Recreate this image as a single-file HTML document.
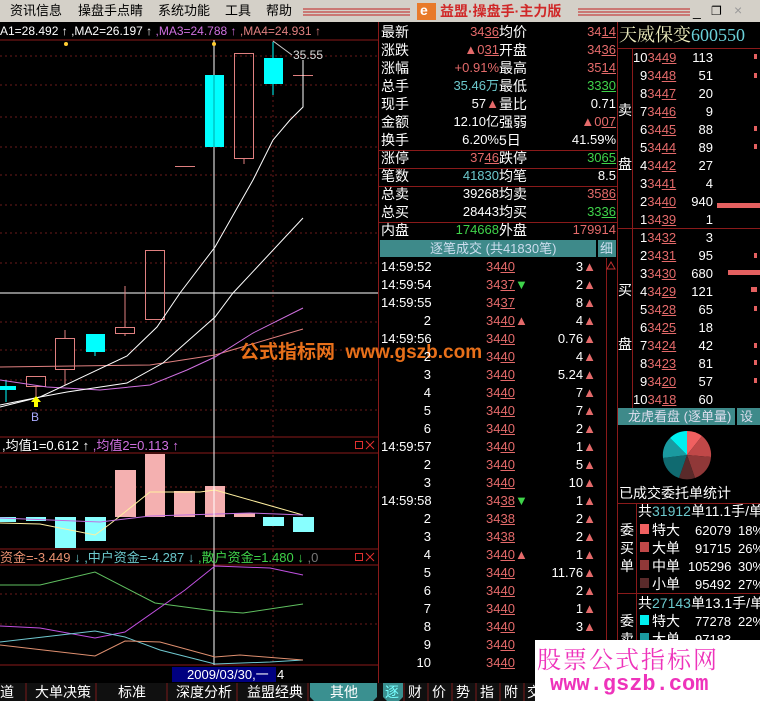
<!DOCTYPE html>
<html><head><meta charset="utf-8"><style>
body{margin:0;width:760px;height:701px;overflow:hidden;background:#000;position:relative;font-family:"Liberation Sans","Noto Sans CJK SC",sans-serif;}
.t{position:absolute;white-space:nowrap;font-size:13px;line-height:16px;color:#fff}
.c{font-size:14px}
.r{color:#e46a6a}.g{color:#3fd34a}.cy{color:#6cc8cc}.w{color:#fff}
u{text-decoration:underline}
svg{position:absolute;left:0;top:0}
</style></head><body>
<svg width="760" height="701">
<rect x="0" y="0" width="760" height="22" fill="#d4d0c8"/>
<g stroke="#c02020" stroke-width="1">
<line x1="303" y1="9" x2="410" y2="9"/><line x1="303" y1="12" x2="410" y2="12"/><line x1="303" y1="15" x2="410" y2="15"/>
<line x1="578" y1="9" x2="690" y2="9"/><line x1="578" y1="12" x2="690" y2="12"/><line x1="578" y1="15" x2="690" y2="15"/>
</g>
<rect x="417" y="3" width="19" height="17" fill="#e87a2a"/>
<g stroke="#8a1a1a" fill="none">
<line x1="0" y1="40" x2="378" y2="40"/><line x1="0" y1="437" x2="378" y2="437"/>
<line x1="0" y1="453" x2="378" y2="453"/><line x1="0" y1="549" x2="378" y2="549"/>
<line x1="0" y1="565" x2="378" y2="565"/><line x1="0" y1="665" x2="378" y2="665"/>
<line x1="378.5" y1="22" x2="378.5" y2="683"/>
<line x1="617.5" y1="22" x2="617.5" y2="683"/>
<line x1="606.5" y1="258" x2="606.5" y2="683"/>
</g>
<g stroke="#6a1a1a" stroke-dasharray="2,3">
<line x1="0" y1="56" x2="378" y2="56"/><line x1="0" y1="85" x2="378" y2="85"/><line x1="0" y1="117" x2="378" y2="117"/><line x1="0" y1="147" x2="378" y2="147"/><line x1="0" y1="175" x2="378" y2="175"/><line x1="0" y1="205" x2="378" y2="205"/><line x1="0" y1="233" x2="378" y2="233"/><line x1="0" y1="263" x2="378" y2="263"/><line x1="0" y1="322" x2="378" y2="322"/><line x1="0" y1="350" x2="378" y2="350"/><line x1="0" y1="380" x2="378" y2="380"/><line x1="0" y1="410" x2="378" y2="410"/>
<line x1="0" y1="487" x2="378" y2="487"/><line x1="0" y1="624" x2="378" y2="624"/><line x1="0" y1="594" x2="378" y2="594"/>
<line x1="273" y1="40" x2="273" y2="665"/>
</g>
<line x1="0" y1="293" x2="378" y2="293" stroke="#fff"/>
<line x1="214" y1="40" x2="214" y2="665" stroke="#fff"/>
<rect x="205" y="75" width="19" height="72" fill="#00ffff"/>
<line x1="214" y1="75" x2="214" y2="147" stroke="#0aa"/>
<rect x="234.5" y="53.5" width="19" height="105" fill="none" stroke="#e08080"/>
<line x1="244" y1="159" x2="244" y2="164" stroke="#e08080"/>
<line x1="273" y1="42" x2="273" y2="95" stroke="#0ff"/>
<rect x="264" y="58" width="19" height="26" fill="#00ffff"/>
<line x1="293" y1="75.5" x2="313" y2="75.5" stroke="#e08080"/>
<line x1="175" y1="166.5" x2="195" y2="166.5" stroke="#e08080"/>
<rect x="145.5" y="250.5" width="19" height="69" fill="none" stroke="#e08080"/>
<line x1="125" y1="286" x2="125" y2="327" stroke="#e08080"/><line x1="125" y1="333" x2="125" y2="336" stroke="#e08080"/>
<rect x="115.5" y="327.5" width="19" height="6" fill="none" stroke="#e08080"/>
<rect x="86" y="334" width="19" height="18" fill="#00ffff"/><line x1="95" y1="352" x2="95" y2="356" stroke="#0ff"/>
<line x1="65" y1="330" x2="65" y2="385" stroke="#e08080"/>
<rect x="55.5" y="338.5" width="19" height="31" fill="#000" stroke="#e08080"/>
<line x1="36" y1="386" x2="36" y2="398" stroke="#e08080"/>
<rect x="26.5" y="376.5" width="19" height="10" fill="#000" stroke="#e08080"/>
<rect x="0" y="386" width="16" height="4" fill="#00ffff"/><line x1="6" y1="380" x2="6" y2="402" stroke="#0ff"/>
<g fill="none" stroke-width="1">
<polyline stroke="#e08080" points="0,367 150,365 215,355 303,329"/>
<polyline stroke="#d070e0" points="0,380 47,387 100,390 150,385 187,370 215,357 253,333 303,308"/>
<polyline stroke="#fff" points="0,405 40,397 67,392 127,383 163,363 215,317 233,293 303,218"/>
<polyline stroke="#fff" points="0,407 40,397 127,356 157,327 180,293 215,247 253,180 273,140 290,120 303,107 303,60"/>
<polyline stroke="#ccc" points="273,41 292,55"/>
</g>
<polygon points="36,396 31,402 34,402 34,407 38,407 38,402 41,402" fill="#ff0"/>
<circle cx="66" cy="44" r="2" fill="#fc3"/><circle cx="214" cy="44" r="2" fill="#fc3"/>
<rect x="0" y="517" width="16" height="5" fill="#8ff"/><rect x="26" y="517" width="20" height="4" fill="#8ff"/>
<rect x="55" y="517" width="21" height="31" fill="#8ff"/><rect x="85" y="517" width="21" height="24" fill="#8ff"/>
<rect x="115" y="470" width="21" height="47" fill="#f4b0b0"/><rect x="145" y="454" width="20" height="63" fill="#f4b0b0"/>
<rect x="174" y="491" width="21" height="26" fill="#f4b0b0"/><rect x="205" y="486" width="20" height="31" fill="#f4b0b0"/>
<rect x="234" y="513" width="21" height="4" fill="#f4b0b0"/><rect x="263" y="517" width="21" height="9" fill="#8ff"/>
<rect x="293" y="517" width="21" height="15" fill="#8ff"/>
<polyline fill="none" stroke="#fff0a0" points="0,523 40,524 95,535 110,524 150,492 200,492 215,490 303,515"/>
<polyline fill="none" stroke="#c070e0" points="0,518 100,522 150,516 250,513 303,515"/>
<line x1="214" y1="453" x2="214" y2="549" stroke="#fff"/>
<polyline fill="none" stroke="#60c060" points="0,585 40,585 95,572 155,603 215,611 243,613 303,604"/>
<polyline fill="none" stroke="#c050e0" points="0,626 40,628 95,638 125,632 185,590 215,566 270,568 303,575"/>
<polyline fill="none" stroke="#70c8d0" points="0,642 95,631 125,637 160,650 215,664 270,662 303,660"/>
<polyline fill="none" stroke="#e09070" points="0,645 95,656 125,641 160,642 215,657 240,655 303,660"/>
<g fill="none" stroke="#e03030"><rect x="355.5" y="441.5" width="7" height="7"/><path d="M366 441l8 8M374 441l-8 8"/><rect x="355.5" y="553.5" width="7" height="7"/><path d="M366 553l8 8M374 553l-8 8"/></g>
<rect x="172" y="667" width="104" height="15" fill="#000080"/>
<rect x="0" y="683" width="760" height="18" fill="#101010"/>
<g stroke="#7a1a1a"><line x1="26" y1="683" x2="26" y2="701"/><line x1="96" y1="683" x2="96" y2="701"/><line x1="167" y1="683" x2="167" y2="701"/><line x1="237" y1="683" x2="237" y2="701"/><line x1="308" y1="683" x2="308" y2="701"/>
<line x1="404" y1="683" x2="404" y2="701"/><line x1="428" y1="683" x2="428" y2="701"/><line x1="452" y1="683" x2="452" y2="701"/><line x1="476" y1="683" x2="476" y2="701"/><line x1="500" y1="683" x2="500" y2="701"/><line x1="524" y1="683" x2="524" y2="701"/></g>
<path d="M310 683H377V697L373 701H314L310 697Z" fill="#3a9090"/>
<path d="M383 683H403V697L399 701H387L383 697Z" fill="#3a9090"/>
<g stroke="#8a1a1a"><line x1="379" y1="150.5" x2="617" y2="150.5"/><line x1="379" y1="168.5" x2="617" y2="168.5"/><line x1="379" y1="186.5" x2="617" y2="186.5"/><line x1="379" y1="222.5" x2="617" y2="222.5"/>
<line x1="617" y1="48.5" x2="760" y2="48.5"/><line x1="617" y1="228.5" x2="760" y2="228.5"/><line x1="617" y1="503.5" x2="760" y2="503.5"/><line x1="617" y1="593.5" x2="760" y2="593.5"/>
<line x1="632.5" y1="48" x2="632.5" y2="408"/><line x1="636.5" y1="503" x2="636.5" y2="701"/></g>
<rect x="380" y="240" width="216" height="17" fill="#3e8a8a"/><rect x="598" y="240" width="18" height="17" fill="#3e8a8a"/>
<rect x="618" y="408" width="117" height="17" fill="#3e8a8a"/><rect x="737" y="408" width="23" height="17" fill="#3e8a8a"/>
<polygon points="611,262 607,269 615,269" fill="none" stroke="#c03030"/>
<rect x="717" y="203" width="43" height="5" fill="#e46060"/><rect x="728" y="270" width="32" height="5" fill="#e46060"/>
<g fill="#e46060"><rect x="754" y="54" width="3" height="5"/><rect x="754" y="73" width="3" height="5"/><rect x="754" y="126" width="3" height="5"/><rect x="754" y="144" width="3" height="5"/><rect x="754" y="253" width="3" height="5"/><rect x="751" y="287" width="6" height="5"/><rect x="754" y="306" width="3" height="5"/><rect x="754" y="343" width="3" height="5"/><rect x="754" y="360" width="3" height="5"/><rect x="754" y="378" width="3" height="5"/></g>
<g transform="translate(687,455)">
<path d="M0 0L0 -24A24 24 0 0 1 15 -19Z" fill="#f06060"/>
<path d="M0 0L15 -19A24 24 0 0 1 24 2Z" fill="#c04848"/>
<path d="M0 0L24 2A24 24 0 0 1 8 23Z" fill="#903838"/>
<path d="M0 0L8 23A24 24 0 0 1 -8 23Z" fill="#5a2a2a"/>
<path d="M0 0L-8 23A24 24 0 0 1 -24 3Z" fill="#106a70"/>
<path d="M0 0L-24 3A24 24 0 0 1 -17 -17Z" fill="#1a9aa0"/>
<path d="M0 0L-17 -17A24 24 0 0 1 0 -24Z" fill="#00f0f0"/>
</g>
<g><rect x="640" y="524" width="9" height="10" fill="#f06060"/><rect x="640" y="542" width="9" height="10" fill="#c04848"/><rect x="640" y="560" width="9" height="10" fill="#903838"/><rect x="640" y="578" width="9" height="10" fill="#5a2a2a"/><rect x="640" y="615" width="9" height="10" fill="#00f0f0"/><rect x="640" y="633" width="9" height="10" fill="#1a9aa0"/></g>
<rect x="535" y="640" width="225" height="61" fill="#fff"/>
</svg>

<div class="t" style="left:10px;top:3px;color:#000;font-size:13px">资讯信息</div>
<div class="t" style="left:78px;top:3px;color:#000;font-size:13px">操盘手点睛</div>
<div class="t" style="left:158px;top:3px;color:#000;font-size:13px">系统功能</div>
<div class="t" style="left:225px;top:3px;color:#000;font-size:13px">工具</div>
<div class="t" style="left:266px;top:3px;color:#000;font-size:13px">帮助</div>
<div class="t" style="left:420px;top:2px;color:#fff;font-weight:bold;font-size:14px">e</div>
<div class="t c" style="left:440px;top:3px;color:#d02828;font-weight:bold">益盟·操盘手·主力版</div>
<div class="t c" style="left:693px;top:3px;color:#000">_</div>
<div class="t" style="left:711px;top:3px;color:#000;font-size:12px">&#x2750;</div>
<div class="t c" style="left:734px;top:2px;color:#999">×</div>
<div class="t" style="left:0;top:23px;font-size:12px"><span class="w">A1=28.492 ↑</span> <span class="w">,MA2=26.197 ↑</span> <span style="color:#d070e0">,MA3=24.788 ↑</span> <span style="color:#e08080">,MA4=24.931 ↑</span></div>
<div class="t" style="left:293px;top:47px;font-size:12px;color:#ddd">35.55</div>
<div class="t" style="left:31px;top:409px;font-size:12px;color:#aaf">B</div>
<div class="t" style="left:240px;top:342px;font-size:19px;line-height:22px;color:#e8701a;font-weight:bold">公式指标网 &nbsp;www.gszb.com</div>
<div class="t" style="left:2px;top:438px;font-size:13px"><span class="w">,均值1=0.612 ↑</span> <span style="color:#d070e0">,均值2=0.113 ↑</span></div>
<div class="t" style="left:0;top:550px;font-size:13px"><span style="color:#e89070">资金=-3.449 </span><span class="cy">↓ ,中户资金=-4.287 ↓</span> <span class="g">,散户资金=1.480 ↓</span> <span style="color:#777">,0</span></div>
<div class="t" style="left:187px;top:667px;font-size:13px">2009/03/30,一</div>
<div class="t" style="left:277px;top:667px;font-size:13px">4</div>
<div class="t c" style="left:0;top:684px">道</div>
<div class="t c" style="left:35px;top:684px">大单决策</div>
<div class="t c" style="left:118px;top:684px">标准</div>
<div class="t c" style="left:176px;top:684px">深度分析</div>
<div class="t c" style="left:247px;top:684px">益盟经典</div>
<div class="t c" style="left:330px;top:684px">其他</div>
<div class="t c" style="left:385px;top:684px;color:#7ff">逐</div>
<div class="t c" style="left:408px;top:684px">财</div><div class="t c" style="left:432px;top:684px">价</div><div class="t c" style="left:456px;top:684px">势</div><div class="t c" style="left:480px;top:684px">指</div><div class="t c" style="left:504px;top:684px">附</div><div class="t c" style="left:527px;top:684px">交</div>

<div style="position:absolute;left:381px;top:24px;width:236px;font-size:14px">
<div class="t c" style="left:0;top:0">最新</div><div class="t r" style="right:118px;top:0">34<u>36</u></div><div class="t c" style="left:118px;top:0">均价</div><div class="t r" style="right:1px;top:0">34<u>14</u></div>
<div class="t c" style="left:0;top:18px">涨跌</div><div class="t r" style="right:118px;top:18px">▲0<u>31</u></div><div class="t c" style="left:118px;top:18px">开盘</div><div class="t r" style="right:1px;top:18px">34<u>36</u></div>
<div class="t c" style="left:0;top:36px">涨幅</div><div class="t r" style="right:118px;top:36px">+0.91%</div><div class="t c" style="left:118px;top:36px">最高</div><div class="t r" style="right:1px;top:36px">35<u>14</u></div>
<div class="t c" style="left:0;top:54px">总手</div><div class="t cy" style="right:118px;top:54px">35.46万</div><div class="t c" style="left:118px;top:54px">最低</div><div class="t g" style="right:1px;top:54px">33<u>30</u></div>
<div class="t c" style="left:0;top:72px">现手</div><div class="t" style="right:118px;top:72px">57<span class="r">▲</span></div><div class="t c" style="left:118px;top:72px">量比</div><div class="t" style="right:1px;top:72px">0.71</div>
<div class="t c" style="left:0;top:90px">金额</div><div class="t" style="right:118px;top:90px">12.10亿</div><div class="t c" style="left:118px;top:90px">强弱</div><div class="t r" style="right:1px;top:90px">▲0<u>07</u></div>
<div class="t c" style="left:0;top:108px">换手</div><div class="t" style="right:118px;top:108px">6.20%</div><div class="t c" style="left:118px;top:108px">5日</div><div class="t" style="right:1px;top:108px">41.59%</div>
<div class="t c" style="left:0;top:126px">涨停</div><div class="t r" style="right:118px;top:126px">37<u>46</u></div><div class="t c" style="left:118px;top:126px">跌停</div><div class="t g" style="right:1px;top:126px">30<u>65</u></div>
<div class="t c" style="left:0;top:144px">笔数</div><div class="t cy" style="right:118px;top:144px">41830</div><div class="t c" style="left:118px;top:144px">均笔</div><div class="t" style="right:1px;top:144px">8.5</div>
<div class="t c" style="left:0;top:162px">总卖</div><div class="t" style="right:118px;top:162px">39268</div><div class="t c" style="left:118px;top:162px">均卖</div><div class="t r" style="right:1px;top:162px">35<u>86</u></div>
<div class="t c" style="left:0;top:180px">总买</div><div class="t" style="right:118px;top:180px">28443</div><div class="t c" style="left:118px;top:180px">均买</div><div class="t g" style="right:1px;top:180px">33<u>36</u></div>
<div class="t c" style="left:0;top:198px">内盘</div><div class="t g" style="right:118px;top:198px">174668</div><div class="t c" style="left:118px;top:198px">外盘</div><div class="t r" style="right:1px;top:198px">179914</div>
</div>
<div class="t" style="left:430px;top:241px;color:#cde">逐笔成交 (共41830笔)</div>
<div class="t" style="left:600px;top:241px;color:#cde">细</div>

<div style="position:absolute;left:381px;top:259px;width:225px">
<div class="t" style="left:0;top:0">14:59:52</div><div class="t r" style="left:105px;top:0">34<u>40</u></div><div class="t" style="right:10px;top:0">3<span class="r">▲</span></div>
<div class="t" style="left:0;top:18px">14:59:54</div><div class="t r" style="left:105px;top:18px">34<u>37</u><span class="g">▼</span></div><div class="t" style="right:10px;top:18px">2<span class="r">▲</span></div>
<div class="t" style="left:0;top:36px">14:59:55</div><div class="t r" style="left:105px;top:36px">34<u>37</u></div><div class="t" style="right:10px;top:36px">8<span class="r">▲</span></div>
<div class="t" style="right:175px;top:54px">2</div><div class="t r" style="left:105px;top:54px">34<u>40</u>▲</div><div class="t" style="right:10px;top:54px">4<span class="r">▲</span></div>
<div class="t" style="left:0;top:72px">14:59:56</div><div class="t r" style="left:105px;top:72px">34<u>40</u></div><div class="t" style="right:10px;top:72px">0.76<span class="r">▲</span></div>
<div class="t" style="right:175px;top:90px">2</div><div class="t r" style="left:105px;top:90px">34<u>40</u></div><div class="t" style="right:10px;top:90px">4<span class="r">▲</span></div>
<div class="t" style="right:175px;top:108px">3</div><div class="t r" style="left:105px;top:108px">34<u>40</u></div><div class="t" style="right:10px;top:108px">5.24<span class="r">▲</span></div>
<div class="t" style="right:175px;top:126px">4</div><div class="t r" style="left:105px;top:126px">34<u>40</u></div><div class="t" style="right:10px;top:126px">7<span class="r">▲</span></div>
<div class="t" style="right:175px;top:144px">5</div><div class="t r" style="left:105px;top:144px">34<u>40</u></div><div class="t" style="right:10px;top:144px">7<span class="r">▲</span></div>
<div class="t" style="right:175px;top:162px">6</div><div class="t r" style="left:105px;top:162px">34<u>40</u></div><div class="t" style="right:10px;top:162px">2<span class="r">▲</span></div>
<div class="t" style="left:0;top:180px">14:59:57</div><div class="t r" style="left:105px;top:180px">34<u>40</u></div><div class="t" style="right:10px;top:180px">1<span class="r">▲</span></div>
<div class="t" style="right:175px;top:198px">2</div><div class="t r" style="left:105px;top:198px">34<u>40</u></div><div class="t" style="right:10px;top:198px">5<span class="r">▲</span></div>
<div class="t" style="right:175px;top:216px">3</div><div class="t r" style="left:105px;top:216px">34<u>40</u></div><div class="t" style="right:10px;top:216px">10<span class="r">▲</span></div>
<div class="t" style="left:0;top:234px">14:59:58</div><div class="t r" style="left:105px;top:234px">34<u>38</u><span class="g">▼</span></div><div class="t" style="right:10px;top:234px">1<span class="r">▲</span></div>
<div class="t" style="right:175px;top:252px">2</div><div class="t r" style="left:105px;top:252px">34<u>38</u></div><div class="t" style="right:10px;top:252px">2<span class="r">▲</span></div>
<div class="t" style="right:175px;top:270px">3</div><div class="t r" style="left:105px;top:270px">34<u>38</u></div><div class="t" style="right:10px;top:270px">2<span class="r">▲</span></div>
<div class="t" style="right:175px;top:288px">4</div><div class="t r" style="left:105px;top:288px">34<u>40</u>▲</div><div class="t" style="right:10px;top:288px">1<span class="r">▲</span></div>
<div class="t" style="right:175px;top:306px">5</div><div class="t r" style="left:105px;top:306px">34<u>40</u></div><div class="t" style="right:10px;top:306px">11.76<span class="r">▲</span></div>
<div class="t" style="right:175px;top:324px">6</div><div class="t r" style="left:105px;top:324px">34<u>40</u></div><div class="t" style="right:10px;top:324px">2<span class="r">▲</span></div>
<div class="t" style="right:175px;top:342px">7</div><div class="t r" style="left:105px;top:342px">34<u>40</u></div><div class="t" style="right:10px;top:342px">1<span class="r">▲</span></div>
<div class="t" style="right:175px;top:360px">8</div><div class="t r" style="left:105px;top:360px">34<u>40</u></div><div class="t" style="right:10px;top:360px">3<span class="r">▲</span></div>
<div class="t" style="right:175px;top:378px">9</div><div class="t r" style="left:105px;top:378px">34<u>40</u></div>
<div class="t" style="right:175px;top:396px">10</div><div class="t r" style="left:105px;top:396px">34<u>40</u></div>
</div>

<div class="t" style="left:619px;top:24px;font-size:18px;line-height:22px;color:#f0f0c0;font-family:'Liberation Serif','Noto Serif CJK SC',serif">天威保变<span style="color:#6ad0d8">600550</span></div>
<div class="t c" style="left:618px;top:102px">卖</div><div class="t c" style="left:618px;top:156px">盘</div>
<div class="t c" style="left:618px;top:282px">买</div><div class="t c" style="left:618px;top:336px">盘</div>
<div style="position:absolute;left:633px;top:50px;width:120px">
<div class="t" style="left:0;top:0">10<span class="r">34<u>49</u></span></div><div class="t" style="right:40px;top:0">113</div>
<div class="t" style="left:7px;top:18px">9<span class="r">34<u>48</u></span></div><div class="t" style="right:40px;top:18px">51</div>
<div class="t" style="left:7px;top:36px">8<span class="r">34<u>47</u></span></div><div class="t" style="right:40px;top:36px">20</div>
<div class="t" style="left:7px;top:54px">7<span class="r">34<u>46</u></span></div><div class="t" style="right:40px;top:54px">9</div>
<div class="t" style="left:7px;top:72px">6<span class="r">34<u>45</u></span></div><div class="t" style="right:40px;top:72px">88</div>
<div class="t" style="left:7px;top:90px">5<span class="r">34<u>44</u></span></div><div class="t" style="right:40px;top:90px">89</div>
<div class="t" style="left:7px;top:108px">4<span class="r">34<u>42</u></span></div><div class="t" style="right:40px;top:108px">27</div>
<div class="t" style="left:7px;top:126px">3<span class="r">34<u>41</u></span></div><div class="t" style="right:40px;top:126px">4</div>
<div class="t" style="left:7px;top:144px">2<span class="r">34<u>40</u></span></div><div class="t" style="right:40px;top:144px">940</div>
<div class="t" style="left:7px;top:162px">1<span class="r">34<u>39</u></span></div><div class="t" style="right:40px;top:162px">1</div>
<div class="t" style="left:7px;top:180px">1<span class="r">34<u>32</u></span></div><div class="t" style="right:40px;top:180px">3</div>
<div class="t" style="left:7px;top:198px">2<span class="r">34<u>31</u></span></div><div class="t" style="right:40px;top:198px">95</div>
<div class="t" style="left:7px;top:216px">3<span class="r">34<u>30</u></span></div><div class="t" style="right:40px;top:216px">680</div>
<div class="t" style="left:7px;top:234px">4<span class="r">34<u>29</u></span></div><div class="t" style="right:40px;top:234px">121</div>
<div class="t" style="left:7px;top:252px">5<span class="r">34<u>28</u></span></div><div class="t" style="right:40px;top:252px">65</div>
<div class="t" style="left:7px;top:270px">6<span class="r">34<u>25</u></span></div><div class="t" style="right:40px;top:270px">18</div>
<div class="t" style="left:7px;top:288px">7<span class="r">34<u>24</u></span></div><div class="t" style="right:40px;top:288px">42</div>
<div class="t" style="left:7px;top:306px">8<span class="r">34<u>23</u></span></div><div class="t" style="right:40px;top:306px">81</div>
<div class="t" style="left:7px;top:324px">9<span class="r">34<u>20</u></span></div><div class="t" style="right:40px;top:324px">57</div>
<div class="t" style="left:0;top:342px">10<span class="r">34<u>18</u></span></div><div class="t" style="right:40px;top:342px">60</div>
</div>
<div class="t" style="left:628px;top:409px;color:#dde">龙虎看盘 (逐单量)</div>
<div class="t" style="left:740px;top:409px;color:#dde">设</div>
<div class="t c" style="left:619px;top:485px">已成交委托单统计</div>
<div class="t c" style="left:638px;top:503px">共<span class="cy">31912</span>单11.1手/单</div>
<div class="t c" style="left:620px;top:522px">委</div><div class="t c" style="left:620px;top:540px">买</div><div class="t c" style="left:620px;top:558px">单</div>
<div class="t c" style="left:652px;top:522px">特大</div><div class="t" style="left:695px;top:523px">62079</div><div class="t" style="left:738px;top:523px">18%</div>
<div class="t c" style="left:652px;top:540px">大单</div><div class="t" style="left:695px;top:541px">91715</div><div class="t" style="left:738px;top:541px">26%</div>
<div class="t c" style="left:652px;top:558px">中单</div><div class="t" style="left:688px;top:559px">105296</div><div class="t" style="left:738px;top:559px">30%</div>
<div class="t c" style="left:652px;top:576px">小单</div><div class="t" style="left:695px;top:577px">95492</div><div class="t" style="left:738px;top:577px">27%</div>
<div class="t c" style="left:638px;top:595px">共<span class="cy">27143</span>单13.1手/单</div>
<div class="t c" style="left:620px;top:613px">委</div><div class="t c" style="left:620px;top:631px">卖</div>
<div class="t c" style="left:652px;top:613px">特大</div><div class="t" style="left:695px;top:614px">77278</div><div class="t" style="left:738px;top:614px">22%</div>
<div class="t c" style="left:652px;top:631px">大单</div><div class="t" style="left:695px;top:632px">97183</div>
<div style="position:absolute;left:535px;top:640px;width:225px;height:61px;background:#fff"></div>
<div class="t" style="left:537px;top:644px;font-size:24px;line-height:28px;color:#ee33bb;font-family:'Noto Serif CJK SC',serif;letter-spacing:2px">股票公式指标网</div>
<div class="t" style="left:550px;top:672px;font-size:22px;line-height:26px;color:#ee33bb;font-family:'Liberation Mono',monospace;font-weight:bold">www.gszb.com</div>
</body></html>
